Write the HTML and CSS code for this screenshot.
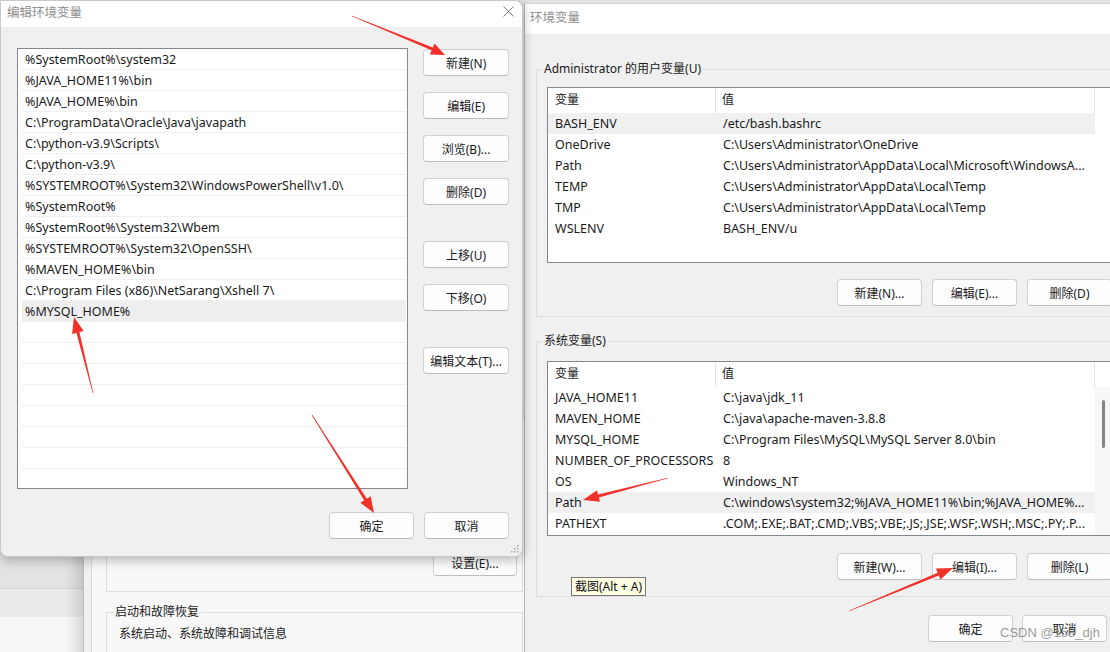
FILE: index.html
```html
<!DOCTYPE html>
<html lang="zh-CN">
<head>
<meta charset="utf-8">
<title>编辑环境变量</title>
<link rel="stylesheet" href="styles.css">
</head>
<body>
<div class="desk">
  <div class="backdrop-left"></div>

  <section class="win sysprops">
    <div class="page">
      <div class="grp-perf">
        <div class="btn btn-set">设置(E)...</div>
      </div>
      <fieldset class="grp2">
        <legend>启动和故障恢复</legend>
        <p>系统启动、系统故障和调试信息</p>
      </fieldset>
    </div>
  </section>

  <section class="win envwin">
    <header class="titlebar env-title"><span class="title">环境变量</span></header>
    <div class="env-body">
      <fieldset class="group group-user">
        <legend>Administrator 的用户变量(U)</legend>
        <div class="table table-user">
          <div class="thead"><span class="c1">变量</span><span class="c2">值</span><span class="c3"></span></div>
          <div class="tbody">
            <div class="rows">
              <div class="tr sel"><span class="c1">BASH_ENV</span><span class="c2">/etc/bash.bashrc</span></div>
              <div class="tr"><span class="c1">OneDrive</span><span class="c2">C:\Users\Administrator\OneDrive</span></div>
              <div class="tr"><span class="c1">Path</span><span class="c2">C:\Users\Administrator\AppData\Local\Microsoft\WindowsA...</span></div>
              <div class="tr"><span class="c1">TEMP</span><span class="c2">C:\Users\Administrator\AppData\Local\Temp</span></div>
              <div class="tr"><span class="c1">TMP</span><span class="c2">C:\Users\Administrator\AppData\Local\Temp</span></div>
              <div class="tr"><span class="c1">WSLENV</span><span class="c2">BASH_ENV/u</span></div>
            </div>
            <div class="vscroll vscroll-empty"></div>
          </div>
        </div>
        <div class="btn-row">
          <div class="btn">新建(N)...</div>
          <div class="btn">编辑(E)...</div>
          <div class="btn">删除(D)</div>
        </div>
      </fieldset>

      <fieldset class="group group-sys">
        <legend>系统变量(S)</legend>
        <div class="table table-sys">
          <div class="thead"><span class="c1">变量</span><span class="c2">值</span><span class="c3"></span></div>
          <div class="tbody">
            <div class="rows">
              <div class="tr"><span class="c1">JAVA_HOME11</span><span class="c2">C:\java\jdk_11</span></div>
              <div class="tr"><span class="c1">MAVEN_HOME</span><span class="c2">C:\java\apache-maven-3.8.8</span></div>
              <div class="tr"><span class="c1">MYSQL_HOME</span><span class="c2">C:\Program Files\MySQL\MySQL Server 8.0\bin</span></div>
              <div class="tr"><span class="c1">NUMBER_OF_PROCESSORS</span><span class="c2">8</span></div>
              <div class="tr"><span class="c1">OS</span><span class="c2">Windows_NT</span></div>
              <div class="tr sel"><span class="c1">Path</span><span class="c2">C:\windows\system32;%JAVA_HOME11%\bin;%JAVA_HOME%...</span></div>
              <div class="tr"><span class="c1">PATHEXT</span><span class="c2">.COM;.EXE;.BAT;.CMD;.VBS;.VBE;.JS;.JSE;.WSF;.WSH;.MSC;.PY;.P...</span></div>
            </div>
            <div class="vscroll"><span class="thumb"></span></div>
          </div>
        </div>
        <div class="btn-row btn-row-sys">
          <div class="btn">新建(W)...</div>
          <div class="btn">编辑(I)...</div>
          <div class="btn">删除(L)</div>
        </div>
      </fieldset>

      <div class="env-footer">
        <div class="btn">确定</div>
        <div class="btn">取消</div>
      </div>
    </div>
  </section>

  <section class="win editdlg">
    <header class="titlebar dlg-title">
      <span class="title">编辑环境变量</span>
      <svg class="close" width="11" height="11" viewBox="0 0 11 11"><path d="M0.5 0.5 L10.5 10.5 M10.5 0.5 L0.5 10.5" stroke="#7a7a7a" stroke-width="1" fill="none"/></svg>
    </header>
    <div class="dlg-body">
      <div class="dlg-main">
        <div class="pathlist">
          <div class="li">%SystemRoot%\system32</div>
          <div class="li">%JAVA_HOME11%\bin</div>
          <div class="li">%JAVA_HOME%\bin</div>
          <div class="li">C:\ProgramData\Oracle\Java\javapath</div>
          <div class="li">C:\python-v3.9\Scripts\</div>
          <div class="li">C:\python-v3.9\</div>
          <div class="li">%SYSTEMROOT%\System32\WindowsPowerShell\v1.0\</div>
          <div class="li">%SystemRoot%</div>
          <div class="li">%SystemRoot%\System32\Wbem</div>
          <div class="li">%SYSTEMROOT%\System32\OpenSSH\</div>
          <div class="li">%MAVEN_HOME%\bin</div>
          <div class="li">C:\Program Files (x86)\NetSarang\Xshell 7\</div>
          <div class="li sel">%MYSQL_HOME%</div>
          <div class="li"></div>
          <div class="li"></div>
          <div class="li"></div>
          <div class="li"></div>
          <div class="li"></div>
          <div class="li"></div>
          <div class="li"></div>
          <div class="li"></div>
        </div>
        <div class="btn-col">
          <div class="btn">新建(N)</div>
          <div class="btn">编辑(E)</div>
          <div class="btn">浏览(B)...</div>
          <div class="btn">删除(D)</div>
          <div class="btn gap-lg">上移(U)</div>
          <div class="btn">下移(O)</div>
          <div class="btn gap-lg">编辑文本(T)...</div>
        </div>
      </div>
      <div class="dlg-footer">
        <div class="btn">确定</div>
        <div class="btn">取消</div>
      </div>
    </div>
    <svg class="grip" width="9" height="9" viewBox="0 0 9 9">
      <rect x="7" y="1" width="1.5" height="1.5" fill="#a8a8a8"/>
      <rect x="4" y="4" width="1.5" height="1.5" fill="#a8a8a8"/>
      <rect x="7" y="4" width="1.5" height="1.5" fill="#a8a8a8"/>
      <rect x="1" y="7" width="1.5" height="1.5" fill="#a8a8a8"/>
      <rect x="4" y="7" width="1.5" height="1.5" fill="#a8a8a8"/>
      <rect x="7" y="7" width="1.5" height="1.5" fill="#a8a8a8"/>
    </svg>
  </section>

  <div class="tooltip">截图(Alt + A)</div>

  <svg class="arrows" width="1110" height="652" viewBox="0 0 1110 652">
    <polygon points="351.9,16.3 431.6,50.3 429.9,54.5 445,55 434.5,43.4 432.8,47.5 352.1,15.7"/>
    <polygon points="93.3,392.9 79.4,332.1 83.7,331.0 74,317 72.1,334.0 76.4,332.9 92.7,393.1"/>
    <polygon points="311.7,415.2 364.2,500.3 360.4,502.7 374,513 370.6,496.3 366.8,498.7 312.3,414.8"/>
    <polygon points="667.9,477.7 598.1,494.5 597.0,490.2 583,500 600.0,501.8 598.9,497.5 668.1,478.3"/>
    <polygon points="849.1,611.3 938.8,575.5 940.5,579.6 953,568 935.9,568.6 937.6,572.7 848.9,610.7"/>
  </svg>

  <div class="watermark">CSDN @158_djh</div>
</div>
</body>
</html>
```

FILE: styles.css
```css
* { box-sizing: border-box; }
html, body { margin: 0; padding: 0; }
body {
  width: 1110px;
  height: 652px;
  overflow: hidden;
  background: #e2e2e2;
  font-family: "Noto Sans", "Noto Sans CJK SC", sans-serif;
  font-size: 12px;
  color: #1a1a1a;
}
.desk { position: relative; width: 1110px; height: 652px; overflow: hidden; }

.backdrop-left {
  position: absolute;
  left: 0; top: 540px;
  width: 90px; height: 112px;
  background: linear-gradient(to bottom, #e3e3e3 0, #e3e3e3 48px, #d4d4d4 48px, #d4d4d4 49px, #ebebeb 49px, #ebebeb 77px, #f7f7f7 77px);
}

.win { position: absolute; }

/* ---------- background System Properties window ---------- */
.sysprops {
  left: 83px; top: 420px;
  width: 460px; height: 260px;
  background: #f0f0f0;
  border-left: 1px solid #bdbdbd;
  box-shadow: -6px 0 14px rgba(0,0,0,0.16);
}
.sysprops .page {
  margin-left: 7px;
  height: 100%;
  background: #f8f8f8;
  border-left: 1px solid #d9d9d9;
  padding: 20px 0 0 14px;
}
.grp-perf {
  width: 417px; height: 152px;
  border: 1px solid #dcdcdc;
  display: flex;
  align-items: flex-end;
  justify-content: flex-end;
  padding: 0 5px 15px 0;
}
.btn-set { width: 84px; height: 29px; }
.grp2 {
  margin: 12px 0 0 0;
  padding: 0;
  width: 417px;
  height: 80px;
  border: 1px solid #dcdcdc;
}
.grp2 legend, .group legend {
  margin-left: 6px;
  padding: 0 2px;
  line-height: 16px;
  font-size: 12px;
}
.group legend { margin-left: -5px; }
.grp2 p { margin: 6px 0 0 12px; line-height: 16px; }

/* ---------- titles ---------- */
.titlebar {
  background: #ffffff;
  display: flex;
  align-items: center;
}
.title { color: #8e8e8e; font-size: 12.5px; line-height: 17px; }

/* ---------- 环境变量 window ---------- */
.envwin {
  left: 524px; top: 3px;
  width: 600px; height: 660px;
  background: #f0f0f0;
  border-left: 1px solid #b5b5b5;
  border-top: 1px solid #d6d6d6;
}
.env-title { height: 30px; padding: 0 0 4px 5px; }
.env-body { padding: 27px 0 0 11px; }
.group {
  margin: 0;
  padding: 0 9px 10px 10px;
  width: 586px;
  border: 1px solid #dcdcdc;
}
.group-sys { margin-top: 16px; padding-bottom: 16px; }
.table {
  margin-top: 10px;
  width: 565px;
  height: 176px;
  border: 1px solid #828790;
  background: #ffffff;
  display: flex;
  flex-direction: column;
  overflow: hidden;
  font-size: 12.5px;
}
.table-sys { margin-top: 12px; height: 175px; }
.thead {
  display: flex;
  height: 25px;
  align-items: center;
  flex: none;
  font-size: 12px;
}
.thead span { height: 25px; line-height: 24px; }
.thead .c1 { width: 168px; padding-left: 7px; border-right: 1px solid #e5e5e5; }
.thead .c2 { width: 379px; padding-left: 6px; border-right: 1px solid #e5e5e5; }
.thead .c3 { flex: 1; }
.tbody { display: flex; flex: 1; }
.rows { width: 547px; }
.tr { display: flex; height: 21px; line-height: 21px; white-space: nowrap; }
.tr.sel { background: #f0f0f0; }
.tr .c1 { width: 168px; padding-left: 7px; overflow: hidden; }
.tr .c2 { flex: 1; padding-left: 7px; overflow: hidden; }
.vscroll {
  flex: 1;
  background: #f7f7f7;
  padding: 13px 0 0 7px;
}
.vscroll-empty { background: #ffffff; }
.thumb {
  display: block;
  width: 3px; height: 48px;
  border-radius: 2px;
  background: #858585;
}
.btn-row {
  margin-top: 16px;
  display: flex;
  justify-content: flex-end;
  gap: 10px;
}
.btn-row-sys { margin-top: 17px; }
.btn-row .btn { width: 85px; }
.env-footer {
  width: 586px;
  margin-top: 18px;
  padding-right: 15px;
  display: flex;
  justify-content: flex-end;
  gap: 9px;
}
.env-footer .btn { width: 85px; }

/* ---------- buttons ---------- */
.btn {
  height: 27px;
  background: #fdfdfd;
  border: 1px solid #d0d0d0;
  border-bottom-color: #bdbdbd;
  border-radius: 4px;
  display: flex;
  align-items: center;
  justify-content: center;
  font-size: 12px;
  color: #1a1a1a;
  white-space: nowrap;
}

/* ---------- 编辑环境变量 dialog ---------- */
.editdlg {
  left: 0; top: 0;
  width: 523px; height: 557px;
  background: #f0f0f0;
  border: 1px solid #c9c9c9;
  border-radius: 0 8px 8px 8px;
  box-shadow: 0 3px 12px rgba(0,0,0,0.28);
}
.dlg-title {
  height: 26px;
  align-items: flex-start;
  justify-content: space-between;
  padding: 3px 8px 0 6px;
  border-radius: 0 8px 0 0;
}
.close { display: block; margin-top: 2px; }
.dlg-body { padding: 21px 13px 0 16px; }
.dlg-main { display: flex; gap: 15px; }
.pathlist {
  width: 392px;
  height: 441px;
  border: 1px solid #828790;
  background: #ffffff;
  padding: 0 1px 0 4px;
  overflow: hidden;
  font-size: 12.5px;
}
.li {
  height: 21px;
  line-height: 20px;
  padding-top: 1px;
  border-bottom: 1px solid #efefef;
  padding-left: 3px;
  white-space: nowrap;
}
.li.sel { background: #eeeeee; }
.btn-col {
  width: 86px;
  padding-top: 1px;
  display: flex;
  flex-direction: column;
  gap: 16px;
}
.btn-col .gap-lg { margin-top: 20px; }
.dlg-footer {
  margin-top: 23px;
  display: flex;
  justify-content: flex-end;
  gap: 10px;
}
.dlg-footer .btn { width: 85px; }
.grip { position: absolute; right: 3px; bottom: 3px; }

/* ---------- overlays ---------- */
.tooltip {
  position: absolute;
  left: 571px; top: 577px;
  height: 19px;
  padding: 0 3px;
  line-height: 17px;
  background: #ffffe1;
  border: 1px solid #767676;
  font-size: 12px;
  color: #111;
  white-space: nowrap;
}
.arrows {
  position: absolute;
  left: 0; top: 0;
  pointer-events: none;
}
.arrows polygon { fill: #f2302a; }
.watermark {
  position: absolute;
  left: 1000px; top: 625px;
  font-family: "Liberation Sans", sans-serif;
  font-size: 13px;
  color: rgba(120,120,120,0.75);
  white-space: nowrap;
}
```
